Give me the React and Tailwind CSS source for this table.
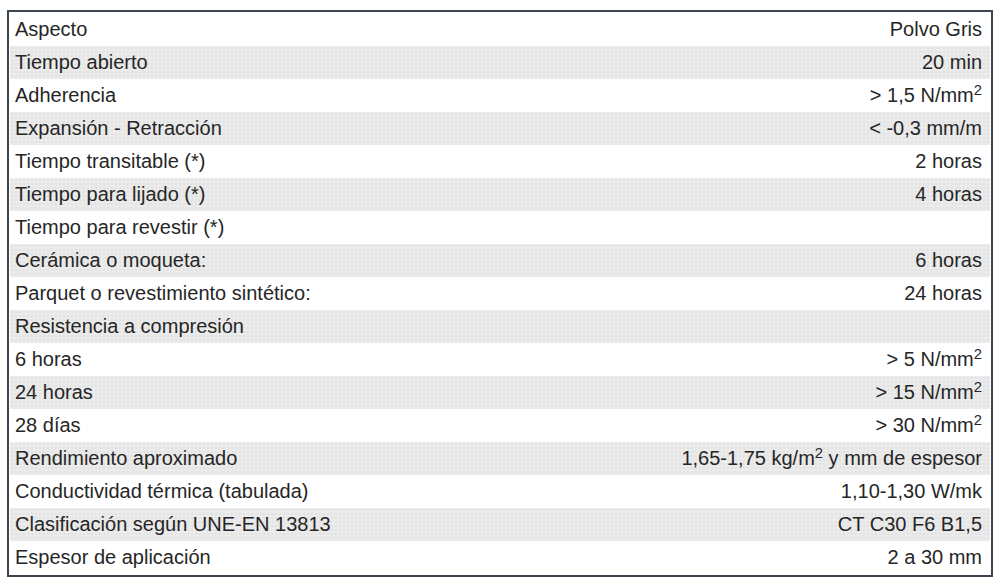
import React from 'react';

const Sup = ({ children }) => <sup className="text-[0.74em] leading-none">{children}</sup>;

const rows = [
  ['Aspecto', 'Polvo Gris'],
  ['Tiempo abierto', '20 min'],
  ['Adherencia', <>&gt; 1,5 N/mm<Sup>2</Sup></>],
  ['Expansión - Retracción', '< -0,3 mm/m'],
  ['Tiempo transitable (*)', '2 horas'],
  ['Tiempo para lijado (*)', '4 horas'],
  ['Tiempo para revestir (*)', ''],
  ['Cerámica o moqueta:', '6 horas'],
  ['Parquet o revestimiento sintético:', '24 horas'],
  ['Resistencia a compresión', ''],
  ['6 horas', <>&gt; 5 N/mm<Sup>2</Sup></>],
  ['24 horas', <>&gt; 15 N/mm<Sup>2</Sup></>],
  ['28 días', <>&gt; 30 N/mm<Sup>2</Sup></>],
  ['Rendimiento aproximado', <>1,65-1,75 kg/m<Sup>2</Sup> y mm de espesor</>],
  ['Conductividad térmica (tabulada)', '1,10-1,30 W/mk'],
  ['Clasificación según UNE-EN 13813', 'CT C30 F6 B1,5'],
  ['Espesor de aplicación', '2 a 30 mm'],
];

export default function App() {
  return (
    <div className="w-[1000px] h-[586px] bg-white pt-[10px] pl-[7px]" style={{ fontFamily: '"Liberation Sans", Arial, sans-serif' }}>
      <div className="w-[986px] border-2 border-[#3d4650] p-px">
        {rows.map(([label, value], i) => (
          <div
            key={i}
            className={`h-[33px] flex items-center justify-between pl-[5px] pr-[8px] pb-px text-[20px] text-[#262626] ${i % 2 === 1 ? 'bg-[#ebebeb] bg-[radial-gradient(#d6d6d6_0.6px,transparent_0.8px)] bg-[length:4px_4px]' : 'bg-white'}`}
          >
            <span>{label}</span>
            <span>{value}</span>
          </div>
        ))}
      </div>
    </div>
  );
}
